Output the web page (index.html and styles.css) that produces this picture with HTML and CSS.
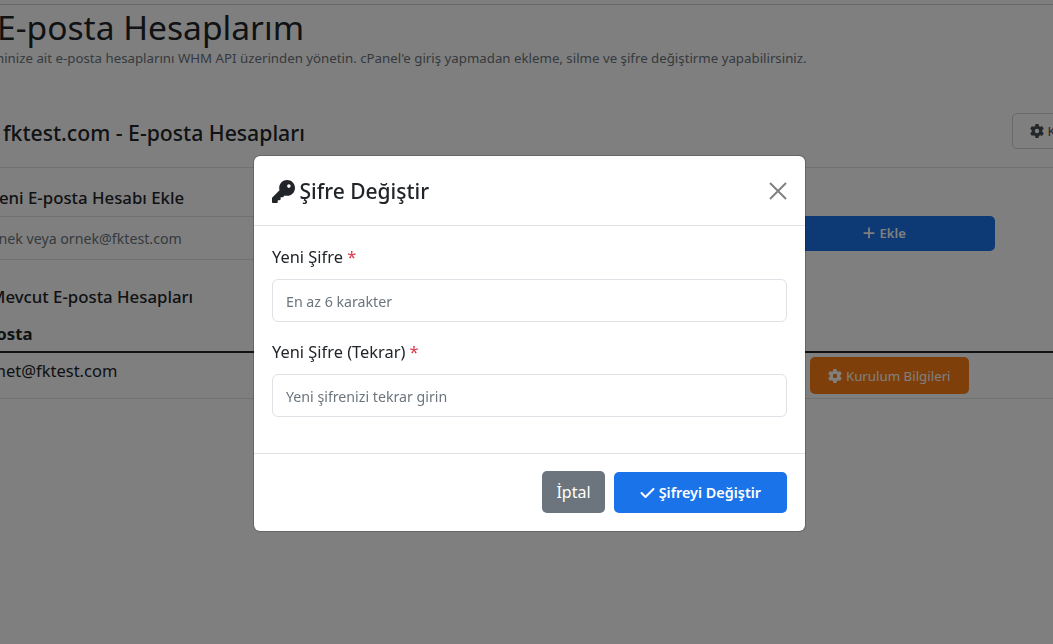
FILE: index.html
```html
<!DOCTYPE html>
<html lang="tr">
<head>
    <meta charset="UTF-8">
    <meta name="viewport" content="width=device-width, initial-scale=1.0">
    <title>E-posta Hesaplarım</title>
    <link rel="stylesheet" href="styles.css">
</head>
<body>
    <svg class="icon-defs" aria-hidden="true">
        <symbol id="i-key" viewBox="0 0 512 512"><path d="M336 352c97.2 0 176-78.8 176-176S433.2 0 336 0S160 78.8 160 176c0 18.7 2.9 36.8 8.3 53.7L7 391c-4.5 4.5-7 10.6-7 17v80c0 13.3 10.7 24 24 24h80c13.3 0 24-10.7 24-24V448h40c13.3 0 24-10.7 24-24V384h40c6.4 0 12.5-2.5 17-7l33.3-33.3c16.9 5.4 35 8.3 53.7 8.3zM376 96a40 40 0 1 1 0 80 40 40 0 1 1 0-80z"/></symbol>
        <symbol id="i-check" viewBox="0 0 448 512"><path d="M438.6 105.4c12.5 12.5 12.5 32.8 0 45.3l-256 256c-12.5 12.5-32.8 12.5-45.3 0l-128-128c-12.5-12.5-12.5-32.8 0-45.3s32.8-12.5 45.3 0L160 338.7 393.4 105.4c12.5-12.5 32.8-12.5 45.3 0z"/></symbol>
        <symbol id="i-plus" viewBox="0 0 448 512"><path d="M256 80c0-17.7-14.3-32-32-32s-32 14.3-32 32V224H48c-17.7 0-32 14.3-32 32s14.3 32 32 32H192V432c0 17.7 14.3 32 32 32s32-14.3 32-32V288H400c17.7 0 32-14.3 32-32s-14.3-32-32-32H256V80z"/></symbol>
        <symbol id="i-gear" viewBox="0 0 512 512"><path d="M495.9 166.6c3.2 8.7 .5 18.4-6.4 24.6l-43.3 39.4c1.1 8.3 1.7 16.8 1.7 25.4s-.6 17.1-1.7 25.4l43.3 39.4c6.9 6.2 9.6 15.9 6.4 24.6c-4.4 11.9-9.7 23.3-15.8 34.3l-4.7 8.1c-6.6 11-14 21.4-22.1 31.2c-5.9 7.2-15.7 9.6-24.5 6.8l-55.7-17.7c-13.4 10.3-28.2 18.9-44 25.4l-12.5 57.1c-2 9.1-9 16.3-18.2 17.8c-13.8 2.3-28 3.5-42.5 3.5s-28.7-1.2-42.5-3.5c-9.2-1.5-16.2-8.7-18.2-17.8l-12.5-57.1c-15.8-6.5-30.6-15.1-44-25.4L83.1 425.9c-8.8 2.8-18.6 .3-24.5-6.8c-8.1-9.8-15.5-20.2-22.1-31.2l-4.7-8.1c-6.1-11-11.4-22.4-15.8-34.3c-3.2-8.7-.5-18.4 6.4-24.6l43.3-39.4C64.6 273.1 64 264.6 64 256s.6-17.1 1.7-25.4L22.4 191.2c-6.9-6.2-9.6-15.9-6.4-24.6c4.4-11.9 9.7-23.3 15.8-34.3l4.7-8.1c6.6-11 14-21.4 22.1-31.2c5.9-7.2 15.7-9.6 24.5-6.8l55.7 17.7c13.4-10.3 28.2-18.9 44-25.4l12.5-57.1c2-9.1 9-16.3 18.2-17.8C227.3 1.2 241.5 0 256 0s28.7 1.2 42.5 3.5c9.2 1.5 16.2 8.7 18.2 17.8l12.5 57.1c15.8 6.5 30.6 15.1 44 25.4l55.7-17.7c8.8-2.8 18.6-.3 24.5 6.8c8.1 9.8 15.5 20.2 22.1 31.2l4.7 8.1c6.1 11 11.4 22.4 15.8 34.3zM256 336a80 80 0 1 0 0-160 80 80 0 1 0 0 160z"/></symbol>
    </svg>

    <div class="page">
        <div class="page-head">
            <h1>E-posta Hesaplarım</h1>
            <p class="page-desc">Domaininize ait e-posta hesaplarını WHM API üzerinden yönetin. cPanel'e giriş yapmadan ekleme, silme ve şifre değiştirme yapabilirsiniz.</p>
        </div>

        <div class="card">
            <div class="card-head">
                <h2>fktest.com - E-posta Hesapları</h2>
                <button class="btn btn-outline"><svg class="icon"><use href="#i-gear"/></svg> Kurulum</button>
            </div>

            <div class="card-body">
                <h3>Yeni E-posta Hesabı Ekle</h3>
                <div class="add-row">
                    <input class="add-input" type="text" placeholder="ornek veya ornek@fktest.com">
                    <button class="btn btn-primary add-btn"><svg class="icon"><use href="#i-plus"/></svg> Ekle</button>
                </div>

                <h3 class="list-title">Mevcut E-posta Hesapları</h3>
                <div class="table">
                    <div class="table-head">E-posta</div>
                    <div class="table-row">
                        <span class="mail">ahmet@fktest.com</span>
                        <button class="btn btn-orange"><svg class="icon"><use href="#i-gear"/></svg> Kurulum Bilgileri</button>
                    </div>
                </div>
            </div>
        </div>
    </div>

    <div class="backdrop">
        <div class="modal">
            <div class="modal-head">
                <h4><svg class="icon-key"><use href="#i-key"/></svg> Şifre Değiştir</h4>
                <button class="close" aria-label="Kapat">
                    <svg viewBox="0 0 18 18" width="18" height="18"><path d="M1 1l16 16M17 1L1 17"/></svg>
                </button>
            </div>
            <div class="modal-body">
                <label>Yeni Şifre <span class="req">*</span></label>
                <input type="password" class="field" placeholder="En az 6 karakter">
                <label>Yeni Şifre (Tekrar) <span class="req">*</span></label>
                <input type="password" class="field" placeholder="Yeni şifrenizi tekrar girin">
            </div>
            <div class="modal-foot">
                <button class="btn-cancel">İptal</button>
                <button class="btn-save"><svg class="icon-check"><use href="#i-check"/></svg> Şifreyi Değiştir</button>
            </div>
        </div>
    </div>
</body>
</html>
```

FILE: styles.css
```css
* {
    box-sizing: border-box;
}

html, body {
    height: 100%;
}

body {
    margin: 0;
    background: #fff;
    color: #212529;
    font-family: "Noto Sans", "Open Sans", sans-serif;
    overflow: hidden;
}

.icon-defs {
    display: none;
}

.icon {
    width: 14px;
    height: 14px;
    fill: currentColor;
    vertical-align: -2px;
}

/* the page is scrolled sideways in the shot, so it starts left of the window */
.page {
    width: 1200px;
    margin-left: -60px;
    padding-top: 4px;
}

.page-head {
    border-top: 1px solid #ccc;
    padding-left: 15px;
}

h1 {
    margin: 0;
    padding-left: 42px;
    font-size: 33.6px;
    font-weight: 400;
    line-height: 45px;
}

.page-desc {
    margin: 0;
    color: #6c757d;
    font-size: 13.27px;
    line-height: 17px;
}

.card-head {
    display: flex;
    justify-content: space-between;
    align-items: center;
    height: 70px;
    margin-top: 31px;
    padding: 0 20px 0 63px;
    border-bottom: 1px solid #dee2e6;
}

h2 {
    margin: 0;
    font-size: 21.2px;
    font-weight: 500;
}

.btn {
    border: 0;
    border-radius: 5px;
    font-family: inherit;
    font-size: 13px;
}

.btn-outline {
    width: 108px;
    height: 36px;
    margin-top: -4px;
    background: transparent;
    border: 1px solid #ced4da;
    color: #495057;
    text-align: left;
    padding-left: 17px;
}

.card-body {
    padding: 19px 20px 0 50px;
}

h3 {
    margin: 0;
    font-size: 16.8px;
    font-weight: 500;
    line-height: 22px;
}

.add-row {
    display: grid;
    grid-template-columns: 1fr 222px;
    align-items: start;
    margin: 7px 125px 0 0;
}

.add-input {
    height: 44px;
    margin-left: -12px;
    padding: 0 0 0 6px;
    border: 0;
    border-top: 1px solid #dee2e6;
    border-bottom: 1px solid #dee2e6;
    background: transparent;
    font-family: inherit;
    font-size: 14.2px;
}

.add-input::placeholder {
    color: #6c757d;
}

.add-btn {
    height: 35px;
    padding-bottom: 2px;
    background: #1a73e8;
    color: #fff;
    font-weight: 600;
}

.list-title {
    margin-top: 26px;
}

.table {
    margin-left: -19px;
}

.table-head {
    margin-top: 15px;
    padding-bottom: 7px;
    border-bottom: 2px solid #212529;
    font-size: 16.8px;
    font-weight: 700;
    line-height: 21px;
}

.table-row {
    display: flex;
    align-items: flex-start;
    justify-content: space-between;
    height: 46px;
    border-bottom: 1px solid #dee2e6;
}

.mail {
    margin-top: 6px;
    font-size: 16.5px;
}

.btn-orange {
    width: 159px;
    height: 37px;
    margin-top: 4px;
    margin-right: 151px;
    background: #fd7e14;
    color: #fff;
    font-size: 13.3px;
}

.backdrop {
    position: fixed;
    inset: 0;
    background: rgba(0, 0, 0, .5);
}

.modal {
    width: 551px;
    height: 375px;
    margin: 156px 0 0 254px;
    background: #fff;
    border-radius: 6px;
    box-shadow: 0 0 0 1px rgba(0, 0, 0, .2);
    display: flex;
    flex-direction: column;
}

.modal-head {
    display: flex;
    justify-content: space-between;
    align-items: center;
    height: 70px;
    padding: 0 18px;
    border-bottom: 1px solid #dee2e6;
}

h4 {
    margin: 0;
    font-size: 21px;
    font-weight: 500;
}

.icon-key {
    width: 23px;
    height: 23px;
    margin-right: -1px;
    fill: #212529;
    vertical-align: -4px;
}

.close {
    width: 18px;
    height: 18px;
    padding: 0;
    border: 0;
    background: none;
}

.close svg {
    display: block;
    stroke: #808080;
    stroke-width: 2;
    fill: none;
}

.modal-body {
    flex: 1;
    padding: 19px 18px 0;
}

label {
    display: block;
    font-size: 16.4px;
    line-height: 24px;
    margin-bottom: 10px;
}

.req {
    color: #dc3545;
}

.field {
    display: block;
    width: 100%;
    height: 43px;
    margin-bottom: 18px;
    padding: 2px 13px 0;
    border: 1px solid #dee2e6;
    border-radius: 6px;
    font-family: inherit;
    font-size: 14.2px;
}

.field::placeholder {
    color: #6c757d;
}

.modal-foot {
    display: flex;
    justify-content: flex-end;
    align-items: flex-end;
    gap: 9px;
    height: 78px;
    padding: 0 18px 18px;
    border-top: 1px solid #dee2e6;
}

.btn-cancel {
    width: 63px;
    height: 42px;
    border: 0;
    border-radius: 5px;
    background: #6c757d;
    color: #fff;
    font-family: inherit;
    font-size: 16px;
}

.btn-save {
    width: 173px;
    height: 41px;
    border: 0;
    border-radius: 5px;
    background: #1a73e8;
    color: #fff;
    font-family: inherit;
    font-size: 14.4px;
    font-weight: 600;
}

.icon-check {
    width: 15px;
    height: 16px;
    fill: #fff;
    vertical-align: -3px;
}
```
